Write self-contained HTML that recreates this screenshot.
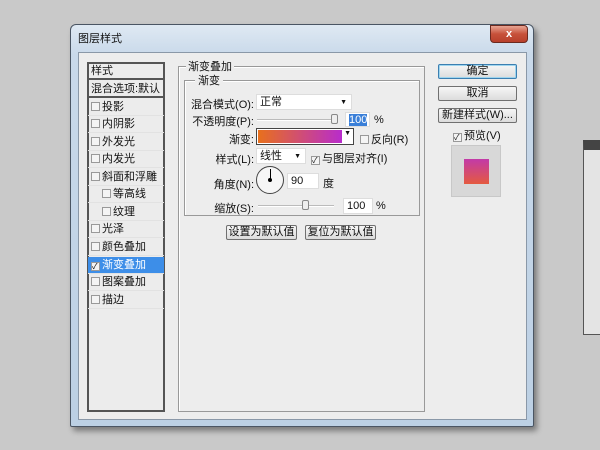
<!DOCTYPE html>
<html><head><meta charset="utf-8"><style>
*{margin:0;padding:0;box-sizing:border-box}
body{width:600px;height:450px;background:#c9c9c9;position:relative;overflow:hidden;font-family:"Liberation Sans","Noto Sans CJK SC",sans-serif;font-size:11px;color:#111}
.a{position:absolute}
.win{left:70px;top:24px;width:464px;height:403px;background:linear-gradient(#dfe9f3,#c9d9ea 30px,#bcd0e4);border:1px solid #4a5563;border-radius:6px 6px 2px 2px;box-shadow:3px 4px 6px rgba(0,0,0,.4)}
.client{left:78px;top:52px;width:449px;height:368px;background:#ededed;border:1px solid #8a98a8}
.cb{display:inline-block;width:9px;height:9px;border:1px solid #999;background:#f4f4f4;vertical-align:-1px;margin-right:2px}
.row{position:absolute;left:88px;width:76px;height:17px;line-height:17px;padding-left:3px;border-bottom:1px solid #e2e2e2;font-size:11px}
.btn{position:absolute;border:1px solid #707070;border-radius:2px;background:linear-gradient(#f6f6f6,#dcdcdc);text-align:center;font-size:11px}
.field{position:absolute;background:#fff;border:1px solid #ddd;font-size:11px;line-height:15px;padding-left:3px}
.lbl{position:absolute;text-align:right;font-size:11px}
.sl{position:absolute;height:2px;background:#bbb;border-bottom:1px solid #fff}
.th{position:absolute;width:7px;height:10px;border:1px solid #888;border-radius:2px;background:#eee}
</style></head><body>
<div class="a" style="left:583px;top:140px;width:20px;height:195px;background:#e4e4e4;border:1px solid #555;border-top:10px solid #444"></div>
<div class="a win"></div>
<div class="a" style="left:78px;top:30px;font-size:11px">图层样式</div>
<div class="a" style="left:490px;top:25px;width:38px;height:18px;background:linear-gradient(#e8a594,#c7513a 50%,#b8402c);border:1px solid #6b2a20;border-radius:0 4px 4px 4px;color:#fff;text-align:center;font-weight:bold;line-height:16px">x</div>
<div class="a client"></div>
<div class="a" style="left:87px;top:62px;width:78px;height:350px;background:#ececec;border:2px solid #555"></div>
<div class="row" style="top:63px;height:17px;border-bottom:2px solid #555">样式</div>
<div class="row" style="top:81px;border-bottom:2px solid #555">混合选项:默认</div>
<div class="row" style="top:99px"><span class="cb"></span>投影</div>
<div class="row" style="top:116px"><span class="cb"></span>内阴影</div>
<div class="row" style="top:134px"><span class="cb"></span>外发光</div>
<div class="row" style="top:151px"><span class="cb"></span>内发光</div>
<div class="row" style="top:169px"><span class="cb"></span>斜面和浮雕</div>
<div class="row" style="top:186px;padding-left:14px"><span class="cb"></span>等高线</div>
<div class="row" style="top:204px;padding-left:14px"><span class="cb"></span>纹理</div>
<div class="row" style="top:221px"><span class="cb"></span>光泽</div>
<div class="row" style="top:239px"><span class="cb"></span>颜色叠加</div>
<div class="row" style="top:257px;background:#3d8ee8;color:#fff"><span class="cb" style="font-size:8px;line-height:7px;color:#000">✓</span>渐变叠加</div>
<div class="row" style="top:274px"><span class="cb"></span>图案叠加</div>
<div class="row" style="top:292px"><span class="cb"></span>描边</div>
<div class="a" style="left:178px;top:66px;width:247px;height:346px;border:1px solid #999;box-shadow:inset 1px 1px #fff"></div>
<div class="a" style="left:186px;top:58px;background:#ededed;padding:0 2px">渐变叠加</div>
<div class="a" style="left:184px;top:80px;width:236px;height:136px;border:1px solid #999;box-shadow:inset 1px 1px #fff"></div>
<div class="a" style="left:195px;top:72px;background:#ededed;padding:0 3px">渐变</div>
<div class="lbl" style="left:190px;top:96px;width:64px">混合模式(O):</div>
<div class="field" style="left:256px;top:94px;width:96px;height:16px">正常<span style="position:absolute;right:4px;font-size:7px">▼</span></div>
<div class="lbl" style="left:190px;top:113px;width:64px">不透明度(P):</div>
<div class="sl" style="left:257px;top:119px;width:80px"></div>
<div class="th" style="left:331px;top:114px"></div>
<div class="field" style="left:345px;top:112px;width:25px;height:15px;"><span style="background:#3a7fd8;color:#fff">100</span></div>
<div class="a" style="left:374px;top:114px">%</div>
<div class="lbl" style="left:190px;top:131px;width:64px">渐变:</div>
<div class="a" style="left:256px;top:128px;width:98px;height:17px;border:1px solid #444;background:#fff"><div style="position:absolute;left:1px;top:1px;width:84px;height:13px;background:linear-gradient(90deg,#e8701c,#b82ccc)"></div><span style="position:absolute;right:2px;top:1px;font-size:7px">▼</span></div>
<div class="a" style="left:360px;top:131px"><span class="cb"></span>反向(R)</div>
<div class="lbl" style="left:190px;top:151px;width:64px">样式(L):</div>
<div class="field" style="left:256px;top:148px;width:50px;height:16px">线性<span style="position:absolute;right:4px;font-size:7px">▼</span></div>
<div class="a" style="left:311px;top:150px"><span class="cb" style="font-size:8px;line-height:7px">✓</span>与图层对齐(I)</div>
<div class="lbl" style="left:190px;top:176px;width:64px">角度(N):</div>
<div class="a" style="left:256px;top:166px;width:28px;height:28px;border:1px solid #444;border-radius:50%;background:#f6f6f6"><div style="position:absolute;left:13px;top:2px;width:1px;height:11px;background:#000"></div><div style="position:absolute;left:11px;top:11px;width:4px;height:4px;border-radius:50%;background:#000"></div></div>
<div class="field" style="left:287px;top:173px;width:32px;height:16px">90</div>
<div class="a" style="left:323px;top:175px">度</div>
<div class="lbl" style="left:190px;top:200px;width:64px">缩放(S):</div>
<div class="sl" style="left:258px;top:205px;width:76px"></div>
<div class="th" style="left:302px;top:200px"></div>
<div class="field" style="left:343px;top:198px;width:30px;height:16px">100</div>
<div class="a" style="left:376px;top:200px">%</div>
<div class="btn" style="left:226px;top:225px;width:71px;height:15px;line-height:13px">设置为默认值</div>
<div class="btn" style="left:305px;top:225px;width:71px;height:15px;line-height:13px">复位为默认值</div>
<div class="btn" style="left:438px;top:64px;width:79px;height:15px;line-height:13px;border-color:#3c7fb1;box-shadow:inset 0 0 0 1px #9fd5ee">确定</div>
<div class="btn" style="left:438px;top:86px;width:79px;height:15px;line-height:13px">取消</div>
<div class="btn" style="left:438px;top:108px;width:79px;height:15px;line-height:13px">新建样式(W)...</div>
<div class="a" style="left:453px;top:127px"><span class="cb" style="font-size:8px;line-height:7px">✓</span>预览(V)</div>
<div class="a" style="left:451px;top:145px;width:50px;height:52px;background:#d8d8d8;border:1px solid #c8c8c8"><div style="position:absolute;left:12px;top:13px;width:25px;height:25px;background:linear-gradient(#c23aa8,#e45a40)"></div></div>
</body></html>
